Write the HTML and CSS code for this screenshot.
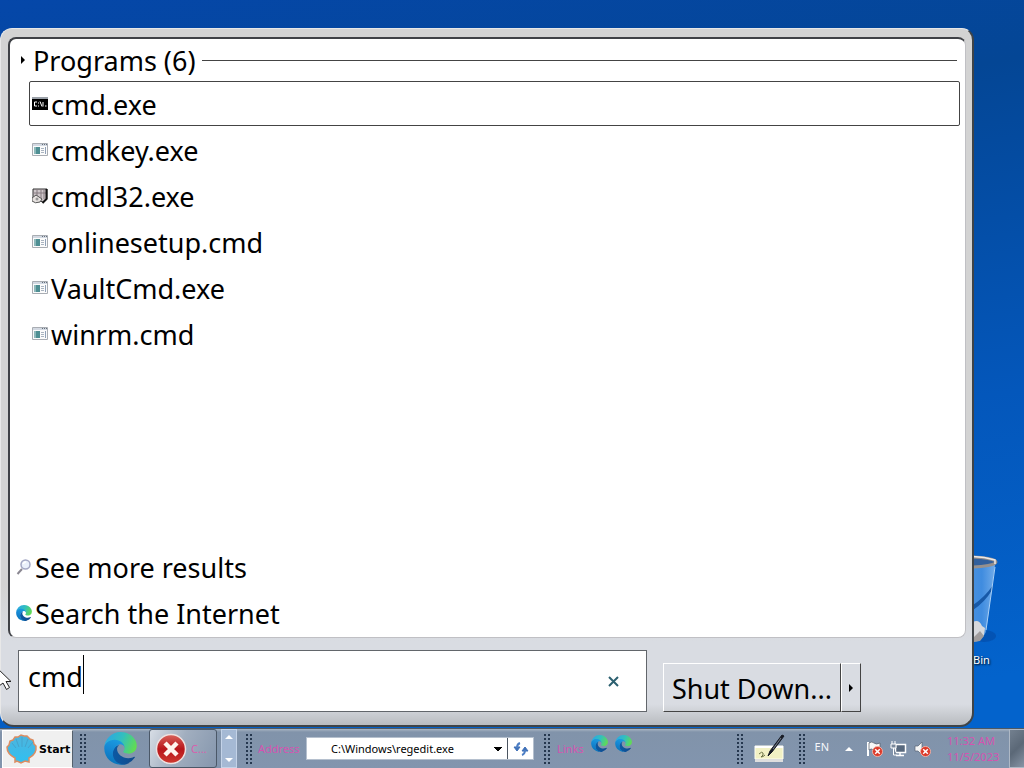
FILE: index.html
```html
<!DOCTYPE html>
<html lang="en">
<head>
<meta charset="utf-8">
<title>Start menu search</title>
<link rel="stylesheet" href="styles.css">
</head>
<body>
<svg class="defs" aria-hidden="true">
  <defs>
    <linearGradient id="e1" x1="0" y1="0" x2="1" y2="0"><stop offset="0" stop-color="#0c59a4"/><stop offset="1" stop-color="#114a8b"/></linearGradient>
    <linearGradient id="e2" x1="0.6" y1="0" x2="0.3" y2="1"><stop offset="0" stop-color="#1b9de2"/><stop offset="0.5" stop-color="#1586d2"/><stop offset="1" stop-color="#0873b8"/></linearGradient>
    <linearGradient id="e3" x1="0" y1="0.3" x2="1" y2="0.6"><stop offset="0" stop-color="#2ba6e6"/><stop offset="0.5" stop-color="#32bfbe"/><stop offset="1" stop-color="#62dc50"/></linearGradient>
    <linearGradient id="red" x1="0" y1="0" x2="0" y2="1"><stop offset="0" stop-color="#d9635c"/><stop offset="0.5" stop-color="#b8161a"/><stop offset="1" stop-color="#cf3a30"/></linearGradient>
    <linearGradient id="bin" x1="0" y1="0" x2="1" y2="0"><stop offset="0" stop-color="#63a2e6"/><stop offset="0.7" stop-color="#4a94e4"/><stop offset="1" stop-color="#84b8ee"/></linearGradient>
    <linearGradient id="shell" x1="0" y1="0" x2="0" y2="1"><stop offset="0" stop-color="#4fb4dc"/><stop offset="1" stop-color="#2fc0f2"/></linearGradient>
    <symbol id="edge" viewBox="0 0 256 260">
      <path fill="url(#e1)" d="M235.68 195.46a93.73 93.73 0 0 1-10.54 4.71 101.87 101.87 0 0 1-35.9 6.46c-47.32 0-88.54-32.55-88.54-74.32A31.48 31.48 0 0 1 117.13 105c-42.8 1.8-53.8 46.4-53.8 72.53 0 73.88 68.09 81.37 82.76 81.37 7.91 0 19.84-2.3 27-4.56l1.31-.44a128.34 128.34 0 0 0 66.6-52.8 4 4 0 0 0-5.32-5.64z"/>
      <path fill="url(#e2)" d="M105.73 241.42a79.2 79.2 0 0 1-22.74-21.34 80.72 80.72 0 0 1 29.53-120c3.12-1.47 8.45-4.13 15.54-4a32.35 32.35 0 0 1 25.69 13 31.88 31.88 0 0 1 6.36 18.66c0-.21 24.46-79.6-80-79.6-43.9 0-80 41.66-80 78.21a130.15 130.15 0 0 0 12.11 56 128 128 0 0 0 156.38 67.11 75.55 75.55 0 0 1-62.78-8z"/>
      <path fill="url(#e3)" d="M152.33 148.86c-.81 1.05-3.3 2.5-3.3 5.66 0 2.61 1.7 5.12 4.72 7.23 14.38 10 41.49 8.68 41.56 8.68a59.56 59.56 0 0 0 30.27-8.35 61.38 61.38 0 0 0 30.43-52.88c.26-22.41-8-37.31-11.34-43.91C223.46 23.84 177.72 0 128 0A128 128 0 0 0 0 126.2c.48-36.54 36.8-66.05 80-66.05 3.5 0 23.46.34 42 10.07 16.34 8.58 24.9 18.94 30.85 29.21 6.18 10.67 7.28 24.15 7.28 29.52s-2.74 13.33-7.8 19.91z"/>
    </symbol>
    <symbol id="window" viewBox="0 0 16 16">
      <path d="M.5 1.5h15v12H.5z" fill="#fbfbfb" stroke="#a9adb3"/>
      <path d="M1 2h14v2H1z" fill="#d3d9e2"/>
      <path d="M10 2.500h1m1 0h1m1 0h1" stroke="#66707c"/>
      <path d="M2 5h6v7H2z" fill="#4f8f93"/><path d="M2 5h2v7H2z" fill="#8fb9bb"/>
      <path d="M9 6.500h3m-3 2h3m-3 2h3" stroke="#aab4c0"/><path d="M13.500 5v7" stroke="#8fa1b8"/>
    </symbol>
    <symbol id="x-badge" viewBox="0 0 12 12">
      <circle cx="6" cy="6" r="5.500" fill="#dc3a2a" stroke="#f2b5a8"/>
      <path d="m3.500 3.500 5 5m0-5-5 5" stroke="#fff" stroke-width="1.600"/>
    </symbol>
  </defs>
</svg>

<div class="desktop">
  <div class="recycle-bin">
    <svg width="34" height="96" viewBox="0 0 34 96" aria-hidden="true">
      <ellipse cx="11" cy="84" rx="12" ry="6" fill="#063f93" opacity=".4"/>
      <path d="M-22 12 22 13 13 80Q8 90 0 90h-18z" fill="url(#bin)" opacity=".85"/>
      <path d="M0 53Q12 45 20 33l-1 5Q12 50 0 58z" fill="#1759a8"/>
      <path d="M0 70q6-3 9 4l3 2-1 7q-4 6-11 6z" fill="#d6d8dc"/><path d="m1 85 6-6 4 5-4 5-6 1z" fill="#a09c9c"/>
      <path d="M22 15 13 78" stroke="#a9cff5"/>
      <ellipse cx="-4" cy="10" rx="27" ry="5" fill="#315f9c" stroke="#96908d" stroke-width="3"/>
      <path d="M-22 6Q2 2 22 8v4" fill="none" stroke="#ece8e6" stroke-width="1.500"/>
    </svg>
    <span>Bin</span>
  </div>

  <main class="start-menu">
    <section class="results">
      <h1 class="group"><span class="tri"></span>Programs (6)<span class="rule"></span></h1>
      <ul class="programs">
        <li><button class="row selected"><svg class="icon" viewBox="0 0 16 16"><path d="M0 2h16v12H0z" fill="#000"/><path d="M0 2h16" stroke="#9aa0a8" stroke-width="2"/><path d="M5 6H2.500v4H5M6.500 6.500v1m0 2v1M8 5.500l2 5m1-4.500v4.500m2-.5h1.500" fill="none" stroke="#fff"/></svg>cmd.exe</button></li>
        <li><button class="row"><svg class="icon"><use href="#window"/></svg>cmdkey.exe</button></li>
        <li><button class="row"><svg class="icon" viewBox="0 0 16 16"><path d="M1 1h14v10l-4 3-10-3z" fill="#cfc7ca" stroke="#333"/><path d="M5 1v8m4-8v9m3-9v10M1 5h13" stroke="#857b80"/><path d="M14.500 1v10l-4 4" fill="none" stroke="#111" stroke-width="2"/><path d="m0 10 4-3 6 4-2 3q-5 2-8-1z" fill="#e8e3e1" stroke="#555"/><circle cx="5" cy="11" r="1.500" fill="#999"/></svg>cmdl32.exe</button></li>
        <li><button class="row"><svg class="icon"><use href="#window"/></svg>onlinesetup.cmd</button></li>
        <li><button class="row"><svg class="icon"><use href="#window"/></svg>VaultCmd.exe</button></li>
        <li><button class="row"><svg class="icon"><use href="#window"/></svg>winrm.cmd</button></li>
      </ul>
      <nav class="more">
        <a class="row" href="#more"><svg class="icon" viewBox="0 0 16 16"><path d="m6 10-4.500 5" stroke="#8a8791" stroke-width="2"/><circle cx="9.500" cy="5.500" r="4.500" fill="#eaf0fb" stroke="#a3a7c4" stroke-width="1.500"/><path d="M7 5q1-2 3-2" fill="none" stroke="#fff" stroke-width="1.500"/></svg>See more results</a>
        <a class="row" href="#internet"><svg class="icon"><use href="#edge"/></svg>Search the Internet</a>
      </nav>
    </section>
    <footer class="menu-footer">
      <div class="search">
        <input type="text" value="cmd" aria-label="Search programs and files">
        <span class="caret"></span>
        <button class="clear" aria-label="Clear search"><svg width="11" height="11" viewBox="0 0 11 11"><path d="m1 1 9 9m0-9-9 9" stroke="#2c6070" stroke-width="2"/></svg></button>
      </div>
      <div class="power">
        <button class="shutdown">Shut Down...</button>
        <button class="power-more" aria-label="Power options"><span class="tri"></span></button>
      </div>
    </footer>
  </main>
  <svg class="pointer" width="12" height="21" viewBox="0 0 12 21" aria-hidden="true"><path d="M-5-4 11 11.500H6l3.500 6-3 2-3.500-6.500-4 3z" fill="#fff" stroke="#222"/></svg>
</div>

<div class="taskbar">
  <button class="start">
    <svg width="32" height="30" viewBox="0 0 32 30"><path d="M9 28v-4Q1 20 1 13l2-2 1-4 3-1 2-3 3 0 3-2 3 1 3 0 3 3 3 1 1 4 2 2q1 8-7 12v4l-4-1-4 2-4-2z" fill="url(#shell)" stroke="#dc8d62" stroke-width="1.500"/><path d="M10 14 6 9m7 4-3-8m6 8V3m3 10 3-8m0 9 5-6" stroke="#46a3cc"/></svg>
    Start
  </button>
  <span class="grip"></span>
  <button class="launch" aria-label="Microsoft Edge"><svg width="33" height="33"><use href="#edge"/></svg></button>
  <button class="task">
    <svg width="32" height="32" viewBox="0 0 32 32"><circle cx="16" cy="16" r="14.500" fill="url(#red)" stroke="#eee0df" stroke-width="1.500"/><path d="m10 10 12 12m0-12L10 22" stroke="#fff5ee" stroke-width="4.500"/></svg>
    <span>C...</span>
  </button>
  <div class="scroll"><button aria-label="Scroll up"><span class="up"></span></button><button aria-label="Scroll down"><span class="down"></span></button></div>
  <span class="grip"></span>
  <label class="address-label" for="address">Address</label>
  <div class="combo">
    <select id="address"><option>C:\Windows\regedit.exe</option></select>
    <button class="go" aria-label="Refresh"><svg width="16" height="16" viewBox="0 0 16 16"><path d="M1 6h6l-3 4zM9 10h6l-3-4z" fill="#3e70b8" stroke="#3e70b8"/><path d="M7 2Q4 3 4 7m5 7q3-1 3-5" fill="none" stroke="#4d7ec4" stroke-width="2"/></svg></button>
  </div>
  <span class="grip"></span>
  <span class="links-label">Links</span>
  <div class="links">
    <a href="#link1" aria-label="Edge link 1"><svg width="17" height="17"><use href="#edge"/></svg></a>
    <a href="#link2" aria-label="Edge link 2"><svg width="17" height="17"><use href="#edge"/></svg></a>
  </div>
  <div class="tray">
    <span class="grip"></span>
    <button class="tablet" aria-label="Tablet input"><svg width="34" height="30" viewBox="0 0 34 30"><path d="M2 12h28v13H2z" fill="#f2f1c4" stroke="#fffff0"/><path d="M2 25h28v3H2z" fill="#dedede"/><path d="M2 12h28v2H2z" fill="#fff"/><path d="M6 20q3-3 4-1t-2 4q2 0 4-2" fill="none" stroke="#6b7245"/><path d="m15 22 2-5L29 1l2 1-12 16z" fill="#171b25" stroke="#171b25"/><path d="m20 15 8-11" stroke="#78818d"/></svg></button>
    <span class="grip"></span>
    <span class="lang">EN</span>
    <span class="up"></span>
    <div class="status">
      <svg width="17" height="16" viewBox="0 0 17 16"><path d="M2 1v14" stroke="#fff" stroke-width="2"/><path d="M3 2q3-2 5 0t6 0v7q-3 2-6 0t-5 0z" fill="#f7f7f7" stroke="#555c68" stroke-width=".7"/><use href="#x-badge" x="6" y="5" width="11" height="11"/></svg>
      <svg width="17" height="16" viewBox="0 0 17 16"><path d="M5.500 3.500h10v8h-10z" fill="#58697e" stroke="#fff" stroke-width="1.500"/><path d="M10 12v2m-4 .500h8" stroke="#fff" stroke-width="1.500"/><path d="M1 3h5v4H1zM2 0v3m3-3v3M3.500 7v7H7" fill="#7a899c" stroke="#fff"/></svg>
      <svg width="17" height="16" viewBox="0 0 17 16"><path d="M1 5h3l4-4v13l-4-4H1z" fill="#f5f5f5" stroke="#566273" stroke-width=".7"/><use href="#x-badge" x="6" y="5" width="11" height="11"/></svg>
    </div>
    <div class="clock"><span>11:32 AM</span><span>11/5/2023</span></div>
    <button class="show-desktop" aria-label="Show desktop"></button>
  </div>
</div>
</body>
</html>
```

FILE: styles.css
```css
* { box-sizing: border-box; }

body {
  margin: 0;
  min-height: 100vh;
  display: flex;
  flex-direction: column;
  background: linear-gradient(170deg, #0547a9 0, #044695 25%, #0457bb 60%, #0363cc 90%);
  font-family: "Noto Sans", "Open Sans", sans-serif;
  color: #000;
}

button, input, select {
  margin: 0;
  padding: 0;
  border: 0;
  border-radius: 0;
  background: none;
  color: inherit;
  font: inherit;
  outline: 0;
}

svg { display: block; flex: none; }
.defs { position: absolute; width: 0; height: 0; }

.desktop {
  position: relative;
  flex: 1;
  display: flex;
  padding: 28px 50px 1px 0;
}

.recycle-bin {
  position: absolute;
  right: 17px;
  bottom: 60px;
  width: 34px;
  color: #fff;
  font-size: 11px;
  line-height: 16px;
  text-shadow: 1px 1px 2px #000;
}

.recycle-bin svg { margin-bottom: 4px; }

.start-menu {
  position: relative;
  flex: 1;
  display: flex;
  flex-direction: column;
  padding: 8px 6px 0 7px;
  border: 1px solid #e8e8e8;
  border-right: 2px solid #3f4448;
  border-bottom: 2px solid #3f4448;
  border-radius: 12px 12px 14px 14px;
  background: linear-gradient(#d3d3d3 0, #d3d3d3 80%, #d9dce2 88%, #d9dce2 97%, #b9bcc0 100%);
}

.results {
  flex: 1;
  display: flex;
  flex-direction: column;
  padding: 2px 5px 0 6px;
  border: 1px solid #c0c0c4;
  border-top: 2px solid #3f4146;
  border-left: 2px solid #3f4146;
  border-radius: 8px;
  background: #fff;
}

.group {
  display: flex;
  align-items: center;
  margin: 0;
  padding: 0 3px 0 5px;
  font-size: 27px;
  font-weight: 400;
  line-height: 40px;
}

.tri {
  border: solid transparent;
  border-width: 4px 0 4px 4px;
  border-left-color: #000;
}

.group .tri { margin: 0 8px 2px 0; }
.rule { flex: 1; margin: 0 0 2px 6px; border-top: 1px solid #444; }

.programs {
  display: flex;
  flex-direction: column;
  gap: 1px;
  margin: 0;
  padding: 0 0 0 13px;
  list-style: none;
}

.row {
  display: flex;
  align-items: center;
  gap: 3px;
  width: 100%;
  height: 45px;
  padding: 2px 2px 0;
  border: 1px solid transparent;
  border-radius: 2px;
  color: #000;
  font-size: 27px;
  line-height: 40px;
  text-decoration: none;
}

.selected { border-color: #444; }
.icon { width: 16px; height: 16px; margin-bottom: 2px; }

.more {
  display: flex;
  flex-direction: column;
  gap: 1px;
  margin-top: auto;
  padding-bottom: 2px;
}

.more .row { padding: 2px 0 0; border-width: 1px 0; }

.menu-footer {
  display: flex;
  align-items: flex-end;
  gap: 16px;
  padding: 12px 105px 13px 10px;
}

.search {
  position: relative;
  flex: 1;
  display: flex;
  height: 62px;
  border: 1px solid #62666b;
  background: #fff;
}

.search input {
  flex: 1;
  min-width: 0;
  padding: 0 0 10px 9px;
  font-size: 27px;
}

.caret {
  position: absolute;
  left: 64px;
  top: 4px;
  width: 1px;
  height: 39px;
  background: #000;
}

.clear { padding: 0 27px 0 10px; }

.power { display: flex; height: 49px; }

.power button {
  border: 1px solid #fff;
  border-right-color: #444;
  border-bottom-color: #444;
}

.shutdown { padding: 2px 8px 0; font-size: 27px; line-height: 40px; }
.power-more { display: flex; align-items: center; justify-content: center; width: 20px; }

.pointer { position: absolute; left: 0; bottom: 37px; }

.taskbar {
  display: flex;
  align-items: center;
  height: 40px;
  padding-left: 2px;
  border-top: 1px solid #4d5964;
  background: linear-gradient(#a9b5c3 0, #8193aa 3px, #8295ae 100%);
  font-size: 11px;
}

.start {
  display: flex;
  align-items: center;
  gap: 1px;
  align-self: stretch;
  width: 71px;
  margin: 1px 5px 0 0;
  padding-left: 3px;
  border: 1px solid #fff;
  border-right-color: #55606c;
  background: #f0f0f0;
  font-family: "DejaVu Sans", sans-serif;
  font-size: 11px;
  font-weight: 700;
}

.grip {
  flex: none;
  width: 10px;
  height: 30px;
  background: conic-gradient(from 90deg at 2px 2px, transparent 75%, #26384f 0) 0 0 / 4px 4px;
}

.launch { margin: 0 12px 0 16px; }

.task {
  display: flex;
  align-items: center;
  gap: 4px;
  align-self: stretch;
  width: 68px;
  padding-left: 5px;
  border: 1px solid #4b5868;
  border-radius: 3px;
  background: linear-gradient(115deg, #d7dde5 0, #a1aebf 45%, #8596ad 100%);
  color: #d860ad;
}

.scroll {
  display: flex;
  flex-direction: column;
  justify-content: space-between;
  align-self: stretch;
  width: 16px;
  margin: 0 7px 0 4px;
  padding: 5px 0;
  border: 1px solid #c4d3e8;
  background: #a5b9d4;
}

.scroll button { display: flex; justify-content: center; }

.up, .down { border: 4px solid transparent; }
.up { border-top: 0; border-bottom-color: #fff; }
.down { border-bottom: 0; border-top-color: #fff; }

.address-label { width: 42px; margin: 0 6px 0 4px; color: #d453b1; }

.combo {
  display: flex;
  width: 228px;
  height: 23px;
  border: 1px solid #4c5561;
  outline: 1px solid #b5c0ce;
  outline-offset: -1px;
  background: #fff;
}

.combo select {
  flex: 1;
  min-width: 0;
  padding-left: 24px;
  appearance: none;
  background-image: linear-gradient(45deg, transparent 50%, #000 50%), linear-gradient(315deg, transparent 50%, #000 50%);
  background-position: right 9px center, right 5px center;
  background-size: 4px 4px;
  background-repeat: no-repeat;
  font-size: 11px;
}

.go { display: flex; align-items: center; justify-content: center; width: 26px; border-left: 1px solid #4c5561; }

.combo + .grip { margin-left: 8px; }
.links-label { width: 26px; margin: 0 8px 0 5px; color: #d453b1; }
.links { display: flex; gap: 7px; padding-bottom: 10px; }

.tray {
  display: flex;
  align-items: center;
  align-self: stretch;
  margin-left: auto;
  color: #f5f7fb;
}

.tablet { margin: 0 10px 0 8px; }
.lang { margin: 0 16px 4px 8px; line-height: 16px; }
.status { display: flex; gap: 7px; margin: 0 16px 0 13px; }

.clock {
  display: flex;
  flex-direction: column;
  width: 53px;
  margin-right: 9px;
  color: #d453b1;
  line-height: 16px;
}

.show-desktop {
  align-self: stretch;
  width: 15px;
  border: 1px solid #aeb8c5;
  border-right: 0;
  background: linear-gradient(135deg, #73808f, #5b6877 50%, #8794a5);
}
```
